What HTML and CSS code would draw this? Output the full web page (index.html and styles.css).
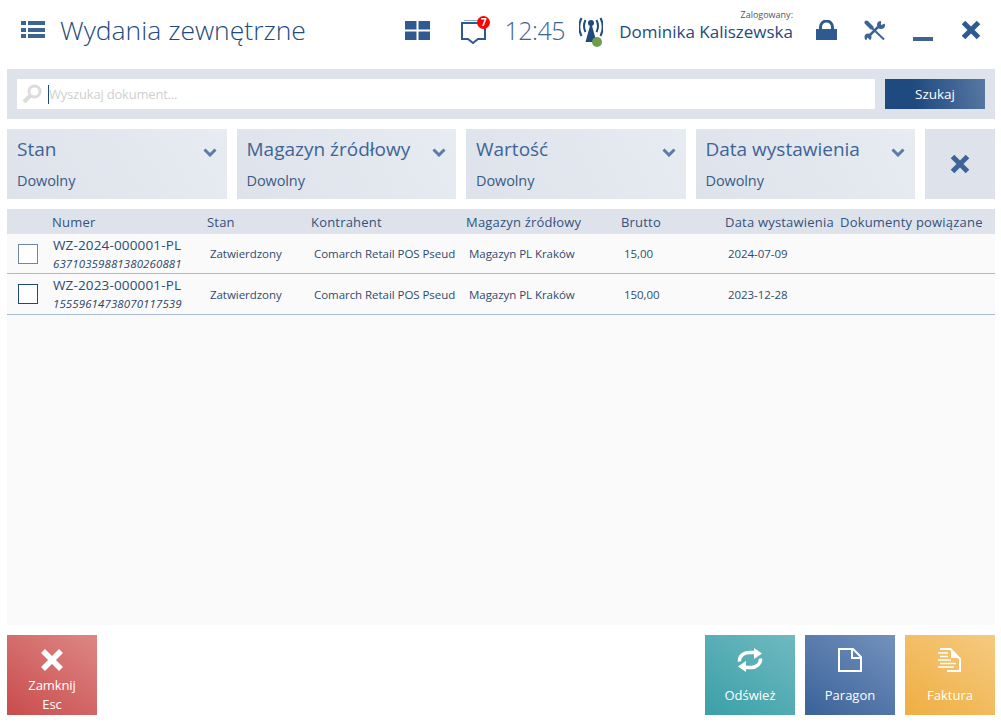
FILE: index.html
```html
<!DOCTYPE html>
<html lang="pl">
<head>
    <meta charset="utf-8">
    <title>Wydania zewnętrzne</title>
    <link rel="stylesheet" href="styles.css">
</head>
<body>
    <header class="topbar">
        <div class="topbar-left">
            <svg class="icon-menu" width="24" height="18" viewBox="0 0 24 18"><path d="M0 0h5v4H0zM7 0h17v4H7zM0 7h5v4H0zM7 7h17v4H7zM0 13h5v4H0zM7 13h17v4H7z"/></svg>
            <h1 class="title">Wydania zewnętrzne</h1>
        </div>
        <div class="topbar-right">
            <svg class="icon-tiles" width="25" height="19" viewBox="0 0 25 19"><path d="M0 0h11.500v8.500H0zM13.500 0H25v8.500H13.500zM0 10.500h11.500V19H0zM13.500 10.500H25V19H13.500z"/></svg>
            <div class="messages">
                <svg width="25" height="26" viewBox="0 0 25 26"><path d="M1 5h23v16h-7l-5 4-5-4H1z" fill="none" stroke="#2f5a90" stroke-width="2"/><path d="M3 2.500h21" stroke="#8fa6c4" stroke-width="1"/></svg>
                <span class="badge">7</span>
            </div>
            <span class="clock">12:45</span>
            <div class="signal">
                <svg width="24" height="32" viewBox="0 0 24 32"><path d="M12 8l5.500 20h-11z" fill="#1f4a80"/><circle cx="12" cy="9" r="3" fill="#1f4a80"/><path d="M6.500 6q-3 6 0 12M17.500 6q3 6 0 12M2.500 4q-4.500 9 0 18M21.500 4q4.500 9 0 18" fill="none" stroke="#1f4a80" stroke-width="2"/></svg>
                <span class="status-dot"></span>
            </div>
            <div class="user">
                <span class="user-label">Zalogowany:</span>
                <span class="user-name">Dominika Kaliszewska</span>
            </div>
            <svg class="icon-lock" width="21" height="20" viewBox="0 0 21 20"><path d="M0 9h21v11H0z"/><path d="M4.500 10V7a6 6 0 0 1 12 0v3" fill="none" stroke="#2f5a90" stroke-width="3"/></svg>
            <svg class="icon-tools" width="22" height="21" viewBox="0 0 22 21">
                <path d="M2.500 2.500l5 5" stroke="#3e6496" stroke-width="4" stroke-linecap="round"/>
                <path d="M7 7l13 12.500" stroke="#3e6496" stroke-width="2"/>
                <path d="M4 17L16 5" stroke="#3e6496" stroke-width="2.500"/>
                <circle cx="17" cy="5" r="4"/>
                <circle cx="4" cy="17" r="3.500"/>
                <path d="M17 5l0-6 6 4z" fill="#fff"/>
                <path d="M3.500 17.500l-2 4.500 6-.5z" fill="#fff"/>
            </svg>
            <span class="icon-minimize"></span>
            <svg class="icon-close" width="20" height="20" viewBox="0 0 20 20"><path d="M2.500 2.500l15 15M17.500 2.500l-15 15" stroke="#2f5a90" stroke-width="5"/></svg>
        </div>
    </header>

    <section class="search">
        <div class="search-input">
            <svg width="20" height="20" viewBox="0 0 20 20"><circle cx="12.500" cy="7.500" r="5.500" fill="none" stroke="#dcdcdc" stroke-width="3"/><path d="M8 12l-6 6" stroke="#dcdcdc" stroke-width="4"/></svg>
            <span class="caret"></span>
            <span class="placeholder">Wyszukaj dokument...</span>
        </div>
        <button class="search-btn">Szukaj</button>
    </section>

    <section class="filters">
        <div class="filter filter-wide">
            <div class="filter-head"><span>Stan</span><svg class="chevron" width="14" height="9" viewBox="0 0 14 9"><path d="M1.500 1.500L7 7l5.500-5.500" fill="none" stroke-width="3"/></svg></div>
            <div class="filter-value">Dowolny</div>
        </div>
        <div class="filter">
            <div class="filter-head"><span>Magazyn źródłowy</span><svg class="chevron" width="14" height="9" viewBox="0 0 14 9"><path d="M1.500 1.500L7 7l5.500-5.500" fill="none" stroke-width="3"/></svg></div>
            <div class="filter-value">Dowolny</div>
        </div>
        <div class="filter filter-wide">
            <div class="filter-head"><span>Wartość</span><svg class="chevron" width="14" height="9" viewBox="0 0 14 9"><path d="M1.500 1.500L7 7l5.500-5.500" fill="none" stroke-width="3"/></svg></div>
            <div class="filter-value">Dowolny</div>
        </div>
        <div class="filter">
            <div class="filter-head"><span>Data wystawienia</span><svg class="chevron" width="14" height="9" viewBox="0 0 14 9"><path d="M1.500 1.500L7 7l5.500-5.500" fill="none" stroke-width="3"/></svg></div>
            <div class="filter-value">Dowolny</div>
        </div>
        <button class="filter-clear">
            <svg width="20" height="20" viewBox="0 0 20 20"><path d="M2.500 2.500l15 15M17.500 2.500l-15 15" stroke="#3e6496" stroke-width="5"/></svg>
        </button>
    </section>

    <main class="list">
        <div class="list-head grid-row">
            <span></span>
            <span>Numer</span>
            <span>Stan</span>
            <span>Kontrahent</span>
            <span>Magazyn źródłowy</span>
            <span>Brutto</span>
            <span>Data wystawienia</span>
            <span>Dokumenty powiązane</span>
        </div>
        <div class="list-item grid-row">
            <span class="checkbox checkbox-dim"></span>
            <div class="doc">
                <div class="doc-number">WZ-2024-000001-PL</div>
                <div class="doc-code">63710359881380260881</div>
            </div>
            <span class="cell">Zatwierdzony</span>
            <span class="cell">Comarch Retail POS Pseud</span>
            <span class="cell">Magazyn PL Kraków</span>
            <span class="cell">15,00</span>
            <span class="cell">2024-07-09</span>
            <span class="cell"></span>
        </div>
        <div class="list-item grid-row">
            <span class="checkbox"></span>
            <div class="doc">
                <div class="doc-number">WZ-2023-000001-PL</div>
                <div class="doc-code">15559614738070117539</div>
            </div>
            <span class="cell">Zatwierdzony</span>
            <span class="cell">Comarch Retail POS Pseud</span>
            <span class="cell">Magazyn PL Kraków</span>
            <span class="cell">150,00</span>
            <span class="cell">2023-12-28</span>
            <span class="cell"></span>
        </div>
    </main>

    <footer class="actions">
        <button class="action action-red">
            <svg width="24" height="24" viewBox="0 0 24 24"><path d="M3 3l18 18M21 3L3 21" stroke="#fff" stroke-width="5.500"/></svg>
            <span class="action-label action-label-tight">Zamknij<br>Esc</span>
        </button>
        <div class="actions-right">
            <button class="action action-teal">
                <svg width="26" height="24" viewBox="0 0 26 24"><path d="M2.500 13.500C2 8 7 4.500 12 4.500h6" fill="none" stroke="#fff" stroke-width="3.500"/><path d="M17 0l8 5.500-8 5.500z" fill="#fff"/><path d="M23.500 10.500c.5 5.500-4.500 9-9.500 9H8" fill="none" stroke="#fff" stroke-width="3.500"/><path d="M9 24l-8-5.500L9 13z" fill="#fff"/></svg>
                <span class="action-label">Odśwież</span>
            </button>
            <button class="action action-blue">
                <svg width="24" height="24" viewBox="0 0 24 24"><path d="M1 1h14l8 8v14H1z" fill="none" stroke="#fff" stroke-width="2"/><path d="M14 2v8h8" fill="none" stroke="#fff" stroke-width="2"/></svg>
                <span class="action-label">Paragon</span>
            </button>
            <button class="action action-orange">
                <svg width="24" height="24" viewBox="0 0 24 24">
                    <path d="M2 1h10.500L22 11v12H9" fill="none" stroke="#fff" stroke-width="2"/>
                    <path d="M13 2v8h8z" fill="#fff"/>
                    <path d="M0 5h10M2 8.500h8M0 12h13M2 15.500h16M0 19h16" stroke="#fff" stroke-width="1.600"/>
                </svg>
                <span class="action-label">Faktura</span>
            </button>
        </div>
    </footer>
</body>
</html>
```

FILE: styles.css
```css
* {
    box-sizing: border-box;
}

body {
    margin: 0;
    height: 724px;
    overflow: hidden;
    background: #fff;
    font-family: "Open Sans", "Noto Sans", sans-serif;
    color: #2f5a90;
    display: flex;
    flex-direction: column;
}

button {
    font-family: inherit;
    border: none;
    padding: 0;
}

.topbar {
    height: 69px;
    padding: 9px 20px 0 21px;
    display: flex;
    justify-content: space-between;
    align-items: flex-start;
}

.topbar-left {
    display: flex;
    align-items: center;
    height: 42px;
}

.icon-menu {
    fill: #3e6496;
}

.title {
    margin: 0 0 0 15px;
    font-size: 26.500px;
    font-weight: 300;
    color: #1f4a80;
}

.topbar-right {
    display: flex;
    align-items: center;
    height: 42px;
}

.icon-tiles {
    fill: #2f5a90;
    margin-right: 31px;
}

.messages {
    position: relative;
    width: 25px;
    height: 26px;
    margin-right: 18px;
    margin-top: 2px;
}

.badge {
    position: absolute;
    top: -2px;
    right: -4px;
    width: 13px;
    height: 13px;
    border-radius: 50%;
    background: #f00;
    color: #fff;
    font-size: 10px;
    font-weight: 700;
    line-height: 13px;
    text-align: center;
}

.clock {
    font-size: 25px;
    font-weight: 300;
    color: #3e6496;
    letter-spacing: -0.5px;
    margin-right: 14px;
}

.signal {
    position: relative;
    width: 24px;
    height: 32px;
    margin-right: 17px;
}

.status-dot {
    position: absolute;
    left: 13px;
    top: 23px;
    width: 10px;
    height: 10px;
    border-radius: 50%;
    background: #6f9d4c;
}

.user {
    display: flex;
    flex-direction: column;
    align-items: flex-end;
    margin-right: 23px;
    width: 173px;
}

.user-label {
    font-size: 9px;
    line-height: 11px;
    margin-top: -8px;
    color: #555;
}

.user-name {
    font-size: 17px;
    line-height: 24px;
    color: #1f4a80;
    white-space: nowrap;
}

.icon-lock {
    fill: #2f5a90;
    margin-right: 27px;
}

.icon-tools {
    fill: #3e6496;
    margin-right: 27px;
}

.icon-minimize {
    width: 20px;
    height: 4px;
    background: #3e6496;
    margin-top: 18px;
    margin-right: 28px;
}

.search {
    margin: 0 6px 0 7px;
    height: 50px;
    background: #dee3eb;
    padding: 10px;
    display: flex;
    gap: 10px;
    flex: none;
}

.search-input {
    flex: 1;
    background: #fff;
    display: flex;
    align-items: center;
    padding-left: 5px;
}

.caret {
    width: 1px;
    height: 19px;
    background: #1f4a80;
    margin-left: 6px;
}

.placeholder {
    font-size: 13px;
    color: #cfcfcf;
    letter-spacing: -0.2px;
}

.search-btn {
    width: 100px;
    color: #fff;
    font-size: 13.500px;
    background: linear-gradient(80deg, #1f4a80 30%, #5878a3 100%);
}

.filters {
    margin: 10px 6px 10px 7px;
    height: 70px;
    display: flex;
    gap: 10px;
    flex: none;
}

.filter {
    width: 219px;
    padding: 7px 10px 0 9.500px;
    background: linear-gradient(60deg, #dee3eb, #e7ebf2);
}

.filter-wide {
    width: 220px;
    padding-left: 10px;
}

.filter-head {
    display: flex;
    justify-content: space-between;
    align-items: center;
    font-size: 19px;
    line-height: 26px;
    color: #3e6496;
    white-space: nowrap;
}

.chevron {
    stroke: #5b7ca8;
    flex: none;
    margin-top: 6px;
}

.filter-value {
    font-size: 14.500px;
    line-height: 20px;
    margin-top: 9px;
    color: #3a5a85;
    letter-spacing: -0.1px;
}

.filter-clear {
    flex: 1;
    background: #dee3eb;
    display: flex;
    align-items: center;
    justify-content: center;
}

.list {
    margin: 0 6px 10px 7px;
    flex: 1;
    background: #fafafa;
    min-height: 0;
}

.grid-row {
    display: grid;
    grid-template-columns: 45px 155px 104px 155px 155px 104px 115px 155px;
}

.list-head {
    height: 25px;
    background: #dee3eb;
    font-size: 13px;
    line-height: 26px;
    color: #33527c;
    letter-spacing: 0.2px;
    white-space: nowrap;
}

.list-item {
    height: 40px;
    align-items: center;
    border-bottom: 1px solid #a9bbd0;
}

.list-item + .list-item {
    height: 41px;
}

.checkbox {
    width: 20px;
    height: 20px;
    margin-left: 11px;
    border: 1px solid #1f4a80;
    background: #fff;
}

.checkbox-dim {
    border-color: #6d87a8;
}

.doc {
    padding-left: 1px;
    white-space: nowrap;
}

.doc-number {
    font-size: 13.500px;
    line-height: 19px;
    letter-spacing: 0.15px;
    color: #2a4b78;
}

.doc-code {
    font-size: 11.500px;
    line-height: 17px;
    font-style: italic;
    color: #2a4468;
    letter-spacing: 0.1px;
}

.cell {
    font-size: 11.500px;
    padding-left: 3px;
    padding-right: 2px;
    color: #2f4a70;
    white-space: nowrap;
    overflow: hidden;
    letter-spacing: -0.05px;
}

.actions {
    height: 89px;
    padding: 0 6px 9px 7px;
    display: flex;
    justify-content: space-between;
    flex: none;
}

.actions-right {
    display: flex;
    gap: 10px;
}

.action {
    width: 90px;
    height: 80px;
    color: #fff;
    display: flex;
    flex-direction: column;
    align-items: center;
    padding-top: 13px;
}

.action-label {
    font-size: 13px;
    line-height: 19px;
    margin-top: 14px;
}

.action-label-tight {
    margin-top: 4px;
    letter-spacing: -0.1px;
}

.action-red {
    background: linear-gradient(35deg, #c94c4c, #dd8785);
}

.action-teal {
    background: linear-gradient(35deg, #3aa0a8, #70b9c0);
}

.action-blue {
    background: linear-gradient(35deg, #3a6299, #7391bd);
}

.action-orange {
    background: linear-gradient(35deg, #efae42, #f5ca80);
}
```
